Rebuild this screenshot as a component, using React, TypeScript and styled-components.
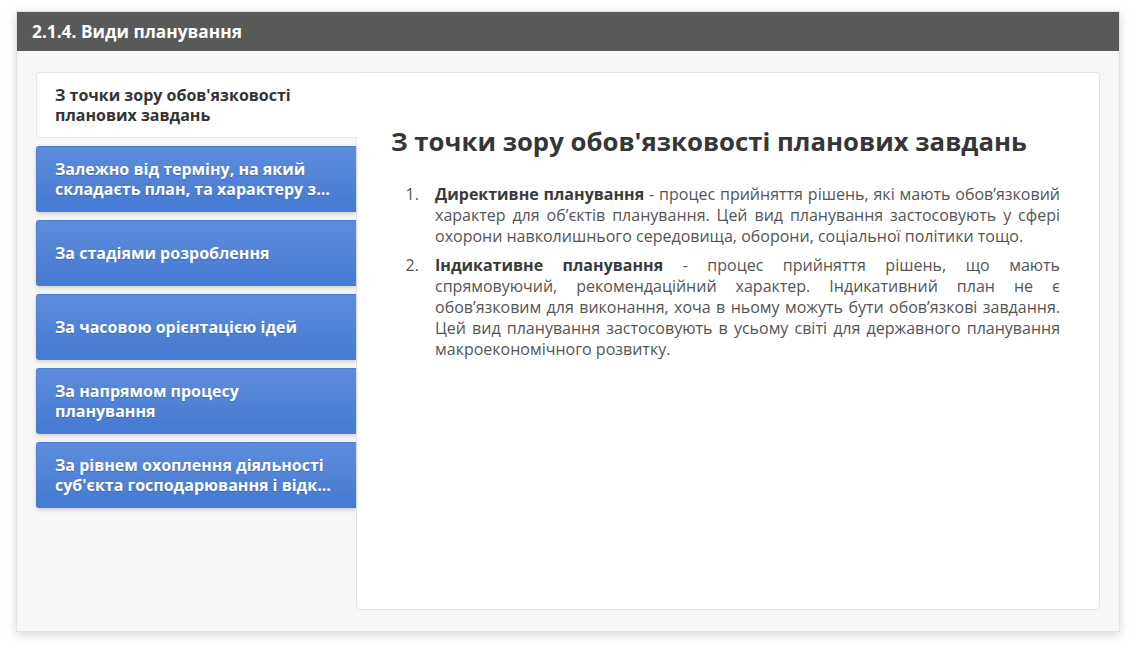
import React, { useState } from "react";
import styled, { createGlobalStyle } from "styled-components";

const GlobalStyle = createGlobalStyle`
    html, body {
        margin: 0;
        padding: 0;
        background: #ffffff;
        font-family: "Open Sans", "Noto Sans", sans-serif;
    }
`;

interface TabProps {
    active: boolean;
}

const Page = styled.div`
    padding: 11px 16px 21px 16px;
`;

const Panel = styled.div`
    background-color: #f6f6f6;
    box-shadow: 0 3px 10px rgba(0, 0, 0, 0.16);
    border: 1px solid #e2e2e2;
`;

const Header = styled.div`
    height: 39px;
    display: flex;
    align-items: center;
    padding-left: 15px;
    background-color: #595959;
    color: white;
    font-size: 17.3px;
    font-weight: 700;
`;

const Body = styled.div`
    display: flex;
    padding: 21px 19px 21px 19px;
`;

const TabList = styled.div`
    width: 320px;
    flex-shrink: 0;
    display: flex;
    flex-direction: column;
    gap: 8px;
`;

const Tab = styled.div<TabProps>`
    height: 66px;
    box-sizing: border-box;
    display: flex;
    align-items: center;
    padding: 0 17px 0 18px;
    border-radius: 3px 0 0 3px;
    cursor: pointer;
    font-size: 16px;
    font-weight: 700;
    line-height: 20px;
    color: ${({ active }) => (active ? "#333333" : "#ffffff")};
    text-shadow: ${({ active }) => (active ? "none" : "0 1px 1px rgba(0,0,0,0.2)")};
    background: ${({ active }) =>
        active ? "#ffffff" : "linear-gradient(to bottom, #5d8cdb, #457ad3)"};
    box-shadow: ${({ active }) => (active ? "none" : "0 2px 4px rgba(0,0,0,0.15)")};
    border: ${({ active }) => (active ? "1px solid #e6e6e6" : "1px solid #4d7dd0")};
    border-right: none;
    margin-right: ${({ active }) => (active ? "-1px" : "0")};
    position: relative;
    z-index: ${({ active }) => (active ? 2 : 0)};
`;

const TabText = styled.span`
    display: -webkit-box;
    -webkit-line-clamp: 2;
    -webkit-box-orient: vertical;
    overflow: hidden;
`;

const Content = styled.div`
    flex: 1;
    height: 538px;
    box-sizing: border-box;
    background-color: white;
    border: 1px solid #e4e4e4;
    border-radius: 0 3px 3px 3px;
    padding: 52px 39px 20px 34px;
    color: #555555;
`;

const Title = styled.h2`
    margin: 0 0 27px 0;
    font-size: 25.75px;
    font-weight: 700;
    line-height: 32px;
    color: #363636;
`;

const List = styled.ol`
    margin: 0;
    padding-left: 32px;
    font-size: 16px;
    line-height: 21px;
`;

const Item = styled.li`
    text-align: justify;
    margin-bottom: 8px;
    padding-left: 12px;
`;

const Term = styled.b`
    color: #3a3a3a;
`;

const tabs = [
    "З точки зору обов'язковості планових завдань",
    "Залежно від терміну, на який складаєть план, та характеру з...",
    "За стадіями розроблення",
    "За часовою орієнтацією ідей",
    "За напрямом процесу планування",
    "За рівнем охоплення діяльності суб'єкта господарювання і відк...",
];

export default function App() {
    const [active, setActive] = useState(0);

    return (
        <>
            <GlobalStyle />
            <Page>
                <Panel>
                    <Header>2.1.4. Види планування</Header>
                    <Body>
                        <TabList>
                            {tabs.map((t, i) => (
                                <Tab key={t} active={i === active} onClick={() => setActive(i)}>
                                    <TabText>{t}</TabText>
                                </Tab>
                            ))}
                        </TabList>
                        <Content>
                            <Title>З точки зору обов'язковості планових завдань</Title>
                            <List>
                                <Item>
                                    <Term>Директивне планування</Term> - процес прийняття рішень, які мають
                                    обов’язковий характер для об’єктів планування. Цей вид планування
                                    застосовують у сфері охорони навколишнього середовища, оборони, соціальної
                                    політики тощо.
                                </Item>
                                <Item>
                                    <Term>Індикативне планування</Term> - процес прийняття рішень, що мають
                                    спрямовуючий, рекомендаційний характер. Індикативний план не є
                                    обов’язковим для виконання, хоча в ньому можуть бути обов’язкові завдання.
                                    Цей вид планування застосовують в усьому світі для державного планування
                                    макроекономічного розвитку.
                                </Item>
                            </List>
                        </Content>
                    </Body>
                </Panel>
            </Page>
        </>
    );
}
